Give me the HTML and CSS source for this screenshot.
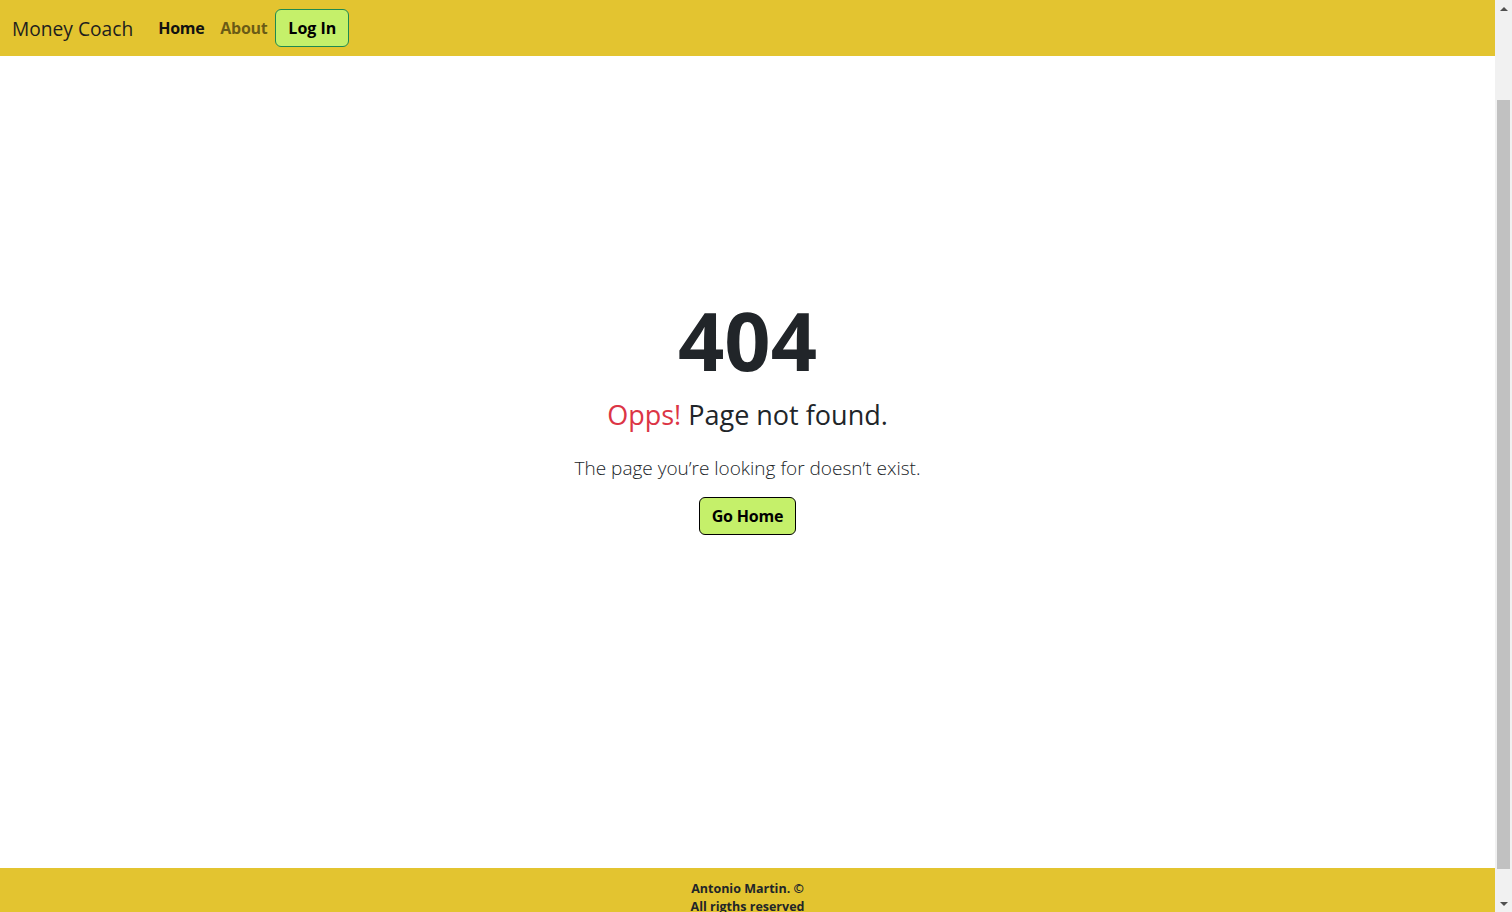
FILE: index.html
```html
<!DOCTYPE html>
<html lang="en">
<head>
<meta charset="utf-8">
<title>Money Coach</title>
<link rel="stylesheet" href="styles.css">
</head>
<body>
<div class="page">
  <nav class="navbar">
    <a class="brand" href="#">Money Coach</a>
    <ul class="nav-links">
      <li><a class="nav-link active" href="#">Home</a></li>
      <li><a class="nav-link" href="#">About</a></li>
      <li><a class="btn-login" href="#">Log In</a></li>
    </ul>
  </nav>
  <main class="notfound">
    <h1 class="code">404</h1>
    <p class="title"><span class="danger">Opps!</span> Page not found.</p>
    <p class="lead">The page you’re looking for doesn’t exist.</p>
    <a class="btn-home" href="#">Go Home</a>
  </main>
  <footer class="footer">
    <p>Antonio Martin. ©</p>
    <p>All rigths reserved</p>
  </footer>
</div>
<div class="scrollbar" aria-hidden="true">
  <div class="arrow arrow-up"></div>
  <div class="track">
    <div class="thumb"></div>
  </div>
  <div class="arrow arrow-down"></div>
</div>
</body>
</html>
```

FILE: styles.css
```css
* { box-sizing: border-box; }
html, body { height: 100%; }
body {
  margin: 0;
  display: flex;
  overflow: hidden;
  font-family: "Open Sans", "Noto Sans", sans-serif;
  color: #212529;
  background: #fff;
}
a { text-decoration: none; }
.page {
  flex: 1;
  min-width: 0;
  overflow: hidden;
}
.navbar {
  height: 56px;
  background: #e3c430;
  display: flex;
  align-items: center;
  padding: 0 12px;
}
.brand {
  font-size: 19.2px;
  color: #1e1e1e;
  margin-right: 17px;
}
.nav-links {
  list-style: none;
  margin: 0;
  padding: 0;
  display: flex;
  align-items: center;
}
.nav-link {
  display: block;
  padding: 8px;
  font-size: 16px;
  font-weight: 700;
  letter-spacing: -0.3px;
  color: rgba(0,0,0,0.55);
}
.nav-link.active { color: #111; }
.btn-login {
  display: block;
  height: 38px;
  line-height: 36px;
  padding: 0 12px;
  font-size: 16px;
  font-weight: 700;
  color: #000;
  background: #c5f06a;
  border: 1px solid #1f8a50;
  border-radius: 6px;
}
.notfound {
  height: 812px;
  display: flex;
  flex-direction: column;
  align-items: center;
  padding-top: 235px;
  text-align: center;
}
.code {
  margin: 0 0 11px;
  font-size: 81px;
  font-weight: 700;
  line-height: 1.2;
}
.title {
  margin: 0 0 22px;
  font-size: 27px;
  line-height: 1.2;
}
.danger { color: #dc3545; }
.lead {
  margin: 0 0 15px;
  font-size: 19px;
  font-weight: 300;
  line-height: 1.5;
}
.btn-home {
  display: block;
  height: 38px;
  line-height: 36px;
  padding: 0 12px;
  font-size: 16px;
  font-weight: 700;
  letter-spacing: -0.2px;
  color: #000;
  background: #c5f06a;
  border: 1px solid #000;
  border-radius: 6px;
}
.footer {
  background: #e3c430;
  padding: 12px 0 10px;
  text-align: center;
  font-size: 12.5px;
  font-weight: 700;
  color: #212529;
}
.footer p { margin: 0; line-height: 18px; }

.scrollbar {
  width: 17px;
  flex: none;
  background: #f1f1f1;
  display: flex;
  flex-direction: column;
}
.arrow {
  height: 17px;
  flex: none;
  display: flex;
  align-items: center;
  justify-content: center;
}
.arrow::before {
  content: "";
  width: 0;
  height: 0;
  border-left: 4px solid transparent;
  border-right: 4px solid transparent;
}
.arrow-up::before { border-bottom: 4px solid #505050; }
.arrow-down::before { border-top: 4px solid #505050; }
.track {
  flex: 1;
  padding: 83px 2px 26px;
  display: flex;
}
.thumb {
  flex: 1;
  background: #c1c1c1;
}
```
